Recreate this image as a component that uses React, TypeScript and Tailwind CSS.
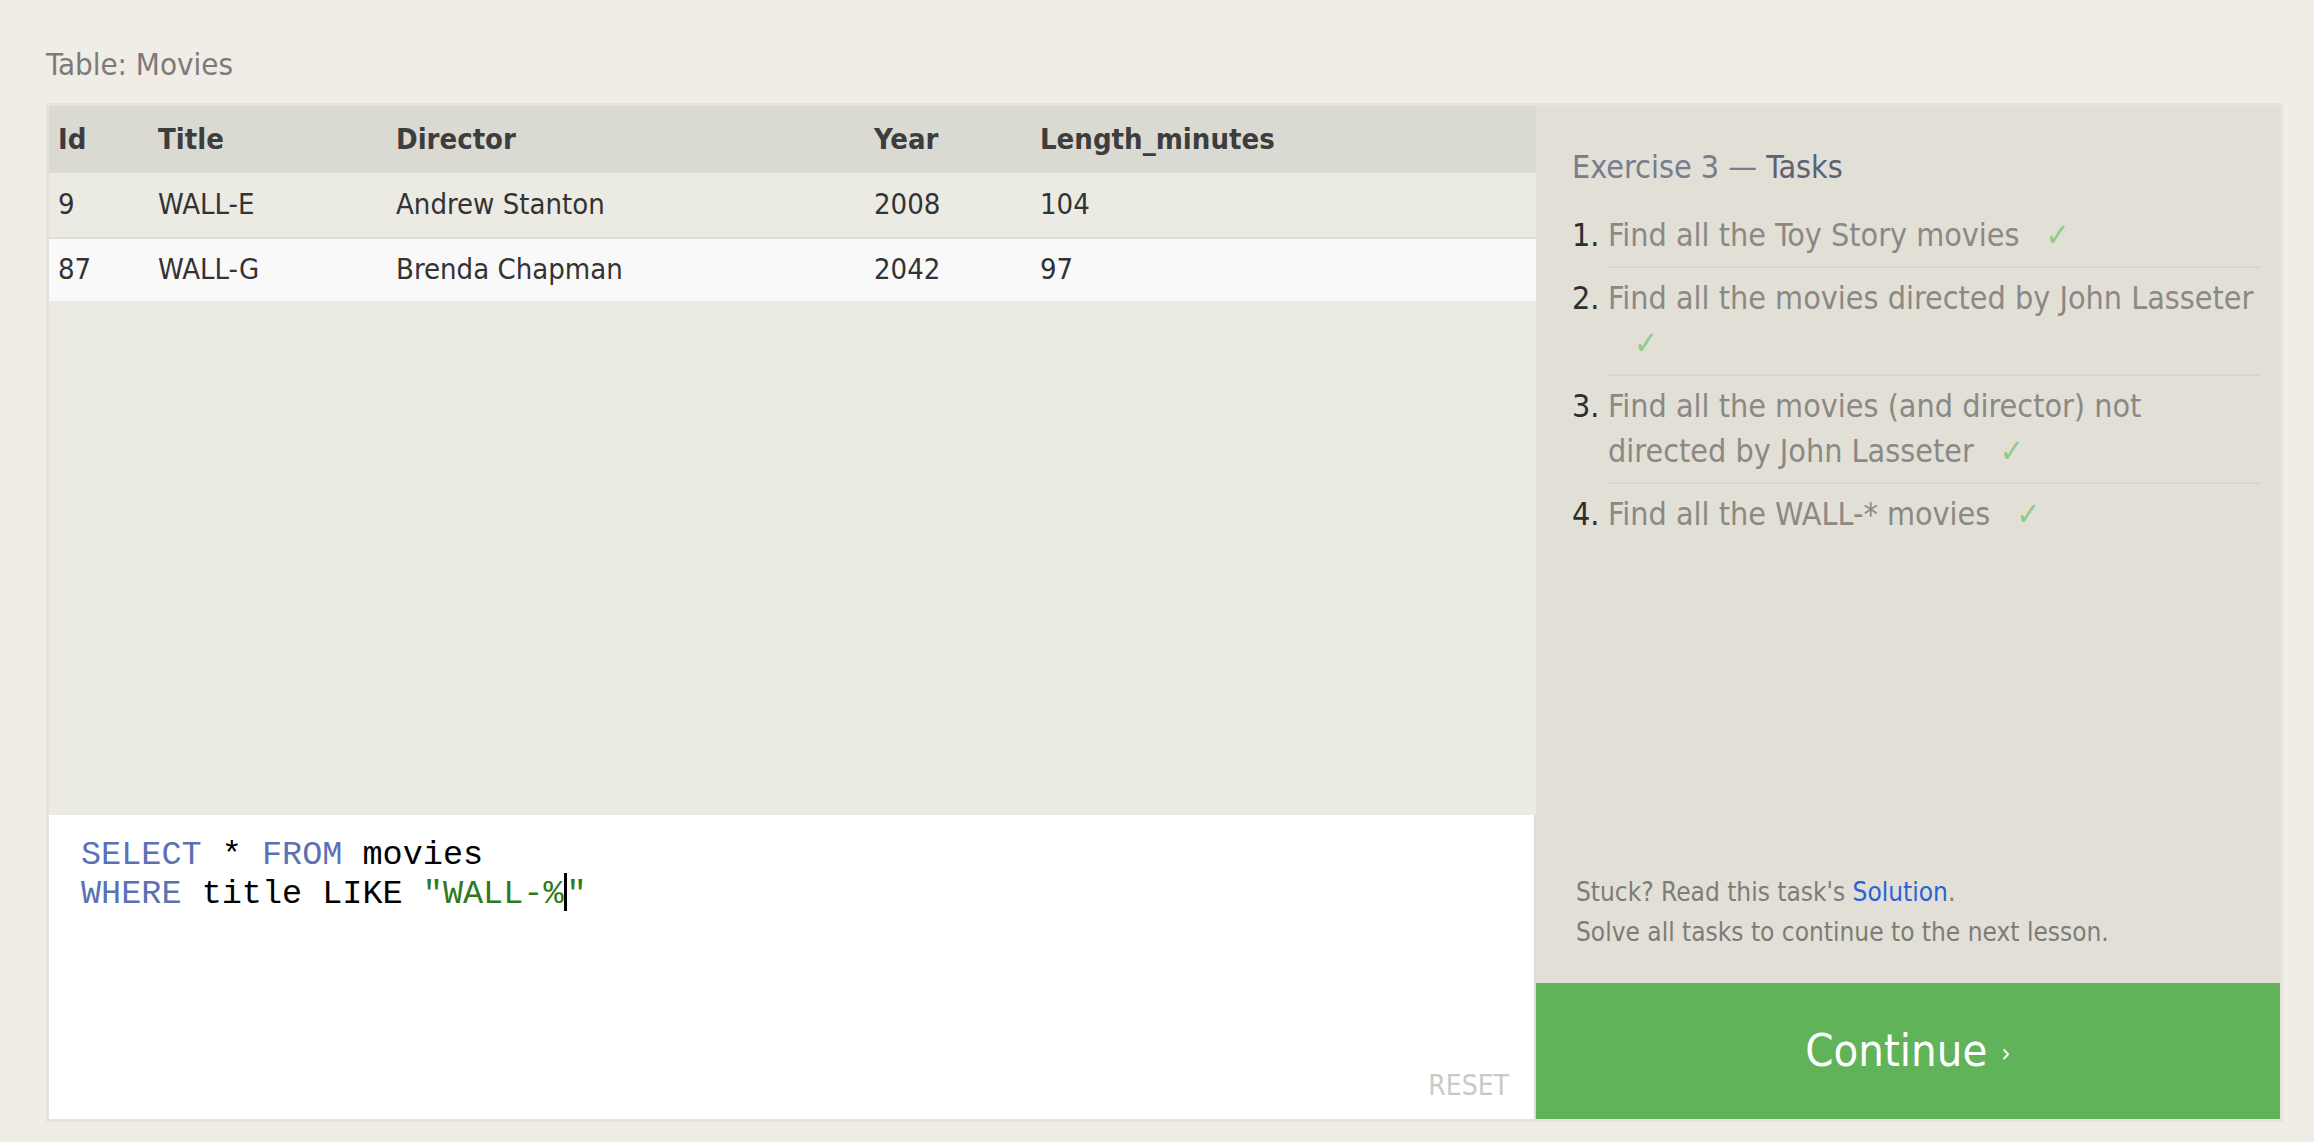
import React from "react";

const F = "font-['DejaVu_Sans_Condensed','DejaVu_Sans',sans-serif] [font-stretch:condensed]";

const cols = ["w-[100px]", "w-[238px]", "w-[478px]", "w-[166px]", "flex-1"];

function Row({ cells, bg, h, bold }: { cells: string[]; bg: string; h: string; bold?: boolean }) {
  return (
    <div className={`flex items-center ${bg} ${h} ${bold ? "font-bold text-[#3d3d3d]" : "text-[#333]"}`}>
      {cells.map((c, i) => (
        <div key={i} className={`${cols[i]} pl-[9px] shrink-0`}>
          {c}
        </div>
      ))}
    </div>
  );
}

function Check() {
  return <span className="ml-[26px] inline-block leading-[30px] text-[#8fcb8a]">✓</span>;
}

export default function App() {
  return (
    <div className={`w-[2314px] h-[1142px] bg-[#efede6] pl-[46px] pr-[31px] pt-[42px] ${F}`}>
      <div className="h-[61px] text-[31px] leading-[44px] text-[#7b7b78]">Table: Movies</div>
      <div className="flex h-[1019px] border-[3px] border-[#e5e3dc]">
        <div className="flex-1 flex flex-col bg-[#ebeae3] text-[29px]">
          <Row cells={["Id", "Title", "Director", "Year", "Length_minutes"]} bg="bg-[#dbdad2]" h="h-[67px]" bold />
          <Row cells={["9", "WALL-E", "Andrew Stanton", "2008", "104"]} bg="bg-[#ebeae3]" h="h-[64px]" />
          <div className="h-[2px] bg-[#dedddb]" />
          <Row cells={["87", "WALL-G", "Brenda Chapman", "2042", "97"]} bg="bg-[#f9f9f9]" h="h-[62px]" />
          <div className="flex-1" />
          <div className="h-[304px] bg-white flex flex-col pl-[32px] pr-[25px] pt-[23px] pb-[18px] border-r-[2px] border-[#dcdbd5]">
            <div className="flex-1 font-['Liberation_Mono',monospace] text-[33.5px] leading-[35px] text-black [font-stretch:normal]">
              <div>
                <span className="text-[#5a72b5]">SELECT</span> * <span className="text-[#5a72b5]">FROM</span> movies
              </div>
              <div>
                <span className="text-[#5a72b5]">WHERE</span> title LIKE{" "}
                <span className="text-[#2f7a1f]">"WALL-%</span>
                <span className="inline-block w-[3px] h-[38px] bg-black align-[-8px]" />
                <span className="text-[#2f7a1f]">"</span>
              </div>
            </div>
            <div className="self-end text-[28px] leading-[30px] text-[#c9c9c9]">RESET</div>
          </div>
        </div>
        <div className="w-[744px] flex flex-col bg-[#e2dfd7]">
          <div className="flex-1 flex flex-col pl-[36px] pr-[19px] pt-[40px]">
            <div className="text-[32px] leading-[42px] text-[#767d8c]">
              Exercise 3 — <span className="text-[#5b6272]">Tasks</span>
            </div>
            <ol className="mt-[17px] text-[32px] leading-[45px]">
              {[
                <>Find all the Toy Story movies<Check /></>,
                <>Find all the movies directed by John Lasseter <Check /></>,
                <>Find all the movies (and director) not directed by John Lasseter<Check /></>,
                <>Find all the WALL-* movies<Check /></>,
              ].map((t, i) => (
                <li key={i} className="flex">
                  <span className="w-[36px] shrink-0 text-[#2e2e2e] py-[8px]">{i + 1}.</span>
                  <div className={`flex-1 text-[#8a8984] py-[8px] ${i < 3 ? "border-b-[2px] border-[#d8d6cd]" : ""}`}>
                    {t}
                  </div>
                </li>
              ))}
            </ol>
            <div className="flex-1" />
            <div className="text-[26px] leading-[40px] text-[#7d7c78] pb-[31px] pl-[4px]">
              <div>
                Stuck? Read this task's <span className="text-[#2a62d6]">Solution</span>.
              </div>
              <div>Solve all tasks to continue to the next lesson.</div>
            </div>
          </div>
          <div className="h-[136px] bg-[#61b35a] flex items-center justify-center text-white">
            <span className="text-[45px]">Continue</span>
            <span className="text-[26px] ml-[14px] mt-[4px]">›</span>
          </div>
        </div>
      </div>
    </div>
  );
}
